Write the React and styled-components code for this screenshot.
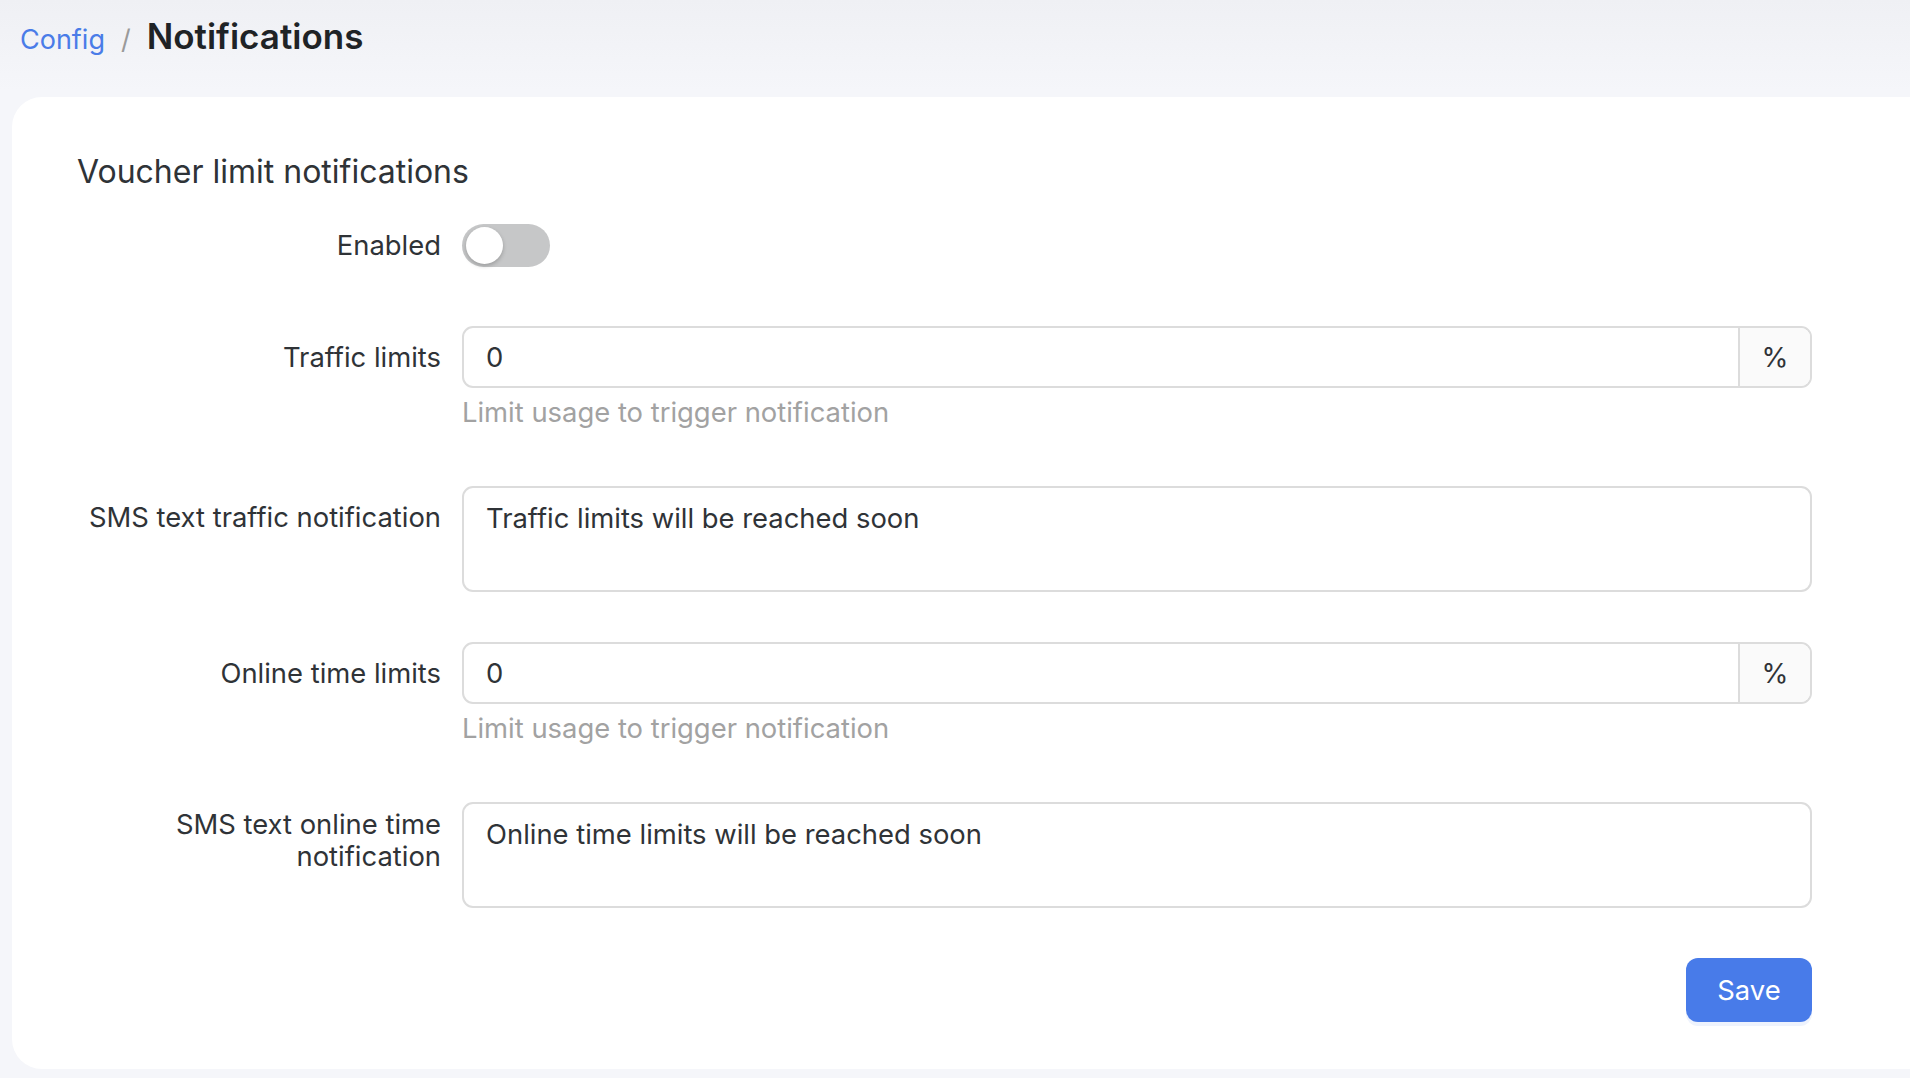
import React from 'react';
import styled, { createGlobalStyle } from 'styled-components';

const GlobalStyle = createGlobalStyle`
	html, body {
		margin: 0;
		padding: 0;
	}
	body {
		font-family: 'Inter', 'Noto Sans', 'Liberation Sans', sans-serif;
		color: #2f3337;
		background: #f5f6fa;
	}
	* {
		box-sizing: border-box;
	}
`;

const fields = [
	{ type: 'switch', label: 'Enabled' },
	{ type: 'addon', label: 'Traffic limits', value: '0', help: 'Limit usage to trigger notification' },
	{ type: 'textarea', label: 'SMS text traffic notification', value: 'Traffic limits will be reached soon' },
	{ type: 'addon', label: 'Online time limits', value: '0', help: 'Limit usage to trigger notification' },
	{ type: 'textarea', label: ['SMS text online time', 'notification'], value: 'Online time limits will be reached soon' },
];

const App = () => {
	return (
		<>
			<GlobalStyle />
			<Page>
				<Header>
					<Crumb>Config</Crumb>
					<Slash>/</Slash>
					<PageTitle>Notifications</PageTitle>
				</Header>
				<Card>
					<SectionTitle>Voucher limit notifications</SectionTitle>
					{fields.map((field, idx) => {
						const multi = Array.isArray(field.label);
						return (
							<FormRow key={idx}>
								<Label $multi={multi}>
									{multi ? field.label.map((line) => <span key={line}>{line}</span>) : field.label}
								</Label>
								<Control>
									{field.type === 'switch' && (
										<SwitchRow>
											<Toggle>
												<Knob />
											</Toggle>
										</SwitchRow>
									)}
									{field.type === 'addon' && (
										<>
											<InputGroup>
												<Input defaultValue={field.value} />
												<Addon>%</Addon>
											</InputGroup>
											<Help>{field.help}</Help>
										</>
									)}
									{field.type === 'textarea' && <TextArea defaultValue={field.value} />}
								</Control>
							</FormRow>
						);
					})}
					<FormRow>
						<div></div>
						<Actions>
							<SaveButton>Save</SaveButton>
						</Actions>
					</FormRow>
				</Card>
			</Page>
		</>
	);
};

export default App;

const Page = styled.div`
	min-height: 100vh;
	overflow: hidden;
	background: linear-gradient(180deg, #eff0f4 0px, #f5f6fa 90px, #f5f6fa 100%);
	padding-bottom: 9px;
`;
const Header = styled.div`
	display: flex;
	align-items: baseline;
	height: 97px;
	padding: 15px 0 0 20px;
`;
const Crumb = styled.a`
	font-size: 27px;
	color: #4a7ce8;
	cursor: pointer;
`;
const Slash = styled.span`
	font-size: 27px;
	color: #9a9a9a;
	margin: 0 16px 0 16px;
`;
const PageTitle = styled.h1`
	margin: 0;
	font-size: 35px;
	font-weight: 600;
	color: #1f2326;
`;
const Card = styled.div`
	margin-left: 12px;
	background: #ffffff;
	border-radius: 30px 0 0 30px;
	padding: 55px 0 47px 65px;
`;
const SectionTitle = styled.h2`
	margin: 0 0 22px;
	font-size: 32px;
	line-height: 40px;
	font-weight: 400;
	color: #2f3337;
`;
const FormRow = styled.div`
	display: grid;
	grid-template-columns: 364px 1350px;
	column-gap: 21px;
	margin-bottom: 50px;
	&:last-child {
		margin-bottom: 0;
	}
`;
const Label = styled.label`
	display: flex;
	flex-direction: column;
	align-items: flex-end;
	text-align: right;
	font-size: 27.4px;
	line-height: 32px;
	padding-top: ${(prop) => (prop.$multi ? '6px' : '15px')};
	color: #2f3337;
`;
const Control = styled.div`
	display: flex;
	flex-direction: column;
`;
const SwitchRow = styled.div`
	height: 62px;
	display: flex;
	align-items: center;
`;
const Toggle = styled.div`
	position: relative;
	width: 88px;
	height: 43px;
	border-radius: 22px;
	background: #c6c7c8;
	cursor: pointer;
`;
const Knob = styled.span`
	position: absolute;
	top: 3px;
	left: 4px;
	width: 37px;
	height: 37px;
	border-radius: 50%;
	background: #ffffff;
	box-shadow: 0 2px 4px rgba(0, 0, 0, 0.22);
`;
const InputGroup = styled.div`
	display: flex;
	height: 62px;
	border: 2px solid #dcdcdc;
	border-radius: 11px;
	overflow: hidden;
`;
const Input = styled.input`
	flex: 1;
	min-width: 0;
	border: none;
	outline: none;
	padding: 0 22px;
	font-family: inherit;
	font-size: 27.4px;
	color: #2f3337;
	background: transparent;
`;
const Addon = styled.div`
	width: 72px;
	display: flex;
	align-items: center;
	justify-content: center;
	border-left: 2px solid #dcdcdc;
	background: #fafafa;
	font-size: 27.4px;
	color: #2f3337;
`;
const Help = styled.div`
	font-size: 27.4px;
	line-height: 48px;
	color: #a2a2a2;
`;
const TextArea = styled.textarea`
	height: 106px;
	resize: none;
	border: 2px solid #dcdcdc;
	border-radius: 11px;
	outline: none;
	padding: 12px 22px;
	font-family: inherit;
	font-size: 27.4px;
	line-height: 36px;
	color: #2f3337;
`;
const Actions = styled.div`
	display: flex;
	justify-content: flex-end;
`;
const SaveButton = styled.button`
	width: 126px;
	height: 64px;
	border: none;
	border-radius: 12px;
	background: #487be9;
	color: #ffffff;
	font-family: inherit;
	font-size: 27.4px;
	box-shadow: 0 4px 0 #eef3fd;
	cursor: pointer;
`;
